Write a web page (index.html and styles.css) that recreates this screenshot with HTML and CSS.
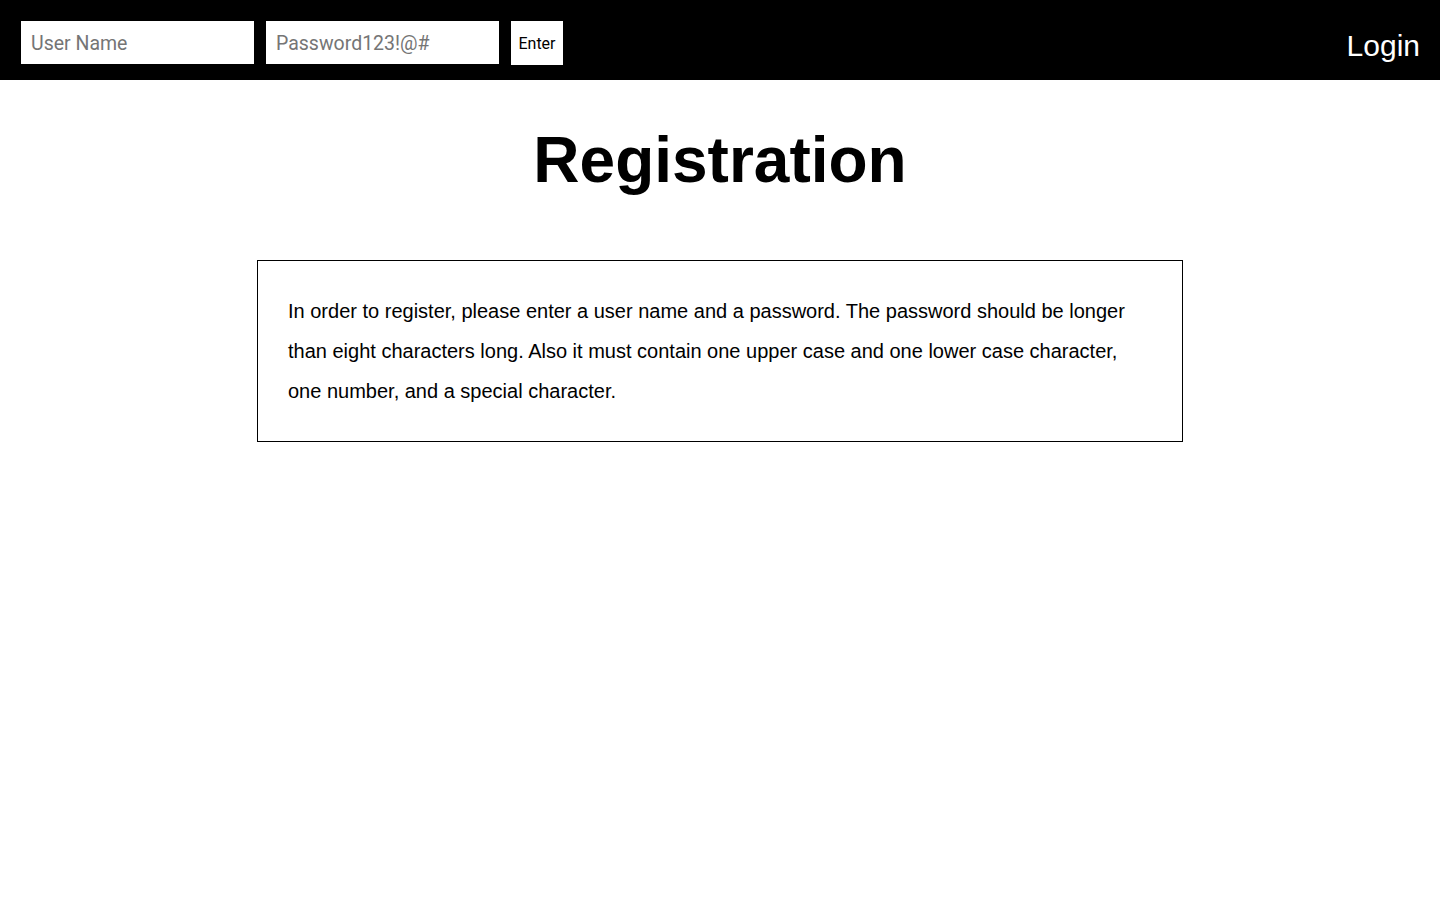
FILE: index.html
```html
<!DOCTYPE html>
<html lang="en">
<head>
<meta charset="utf-8">
<title>Registration</title>
<link rel="stylesheet" href="styles.css">
</head>
<body>
<header class="topbar">
  <form class="login-form">
    <input class="field" type="text" placeholder="User Name">
    <input class="field" type="text" placeholder="Password123!@#">
    <button class="enter" type="button">Enter</button>
  </form>
  <a class="login-link" href="#">Login</a>
</header>
<main class="content">
  <h1 class="title">Registration</h1>
  <div class="info">
    <p>In order to register, please enter a user name and a password. The password should be longer than eight characters long. Also it must contain one upper case and one lower case character, one number, and a special character.</p>
  </div>
</main>
</body>
</html>
```

FILE: styles.css
```css
* { box-sizing: border-box; }
html, body { margin: 0; padding: 0; background: #fff; }
body { font-family: "Liberation Sans", Arial, sans-serif; color: #000; }

.topbar {
  height: 80px;
  background: #000;
  display: flex;
  align-items: center;
  justify-content: space-between;
  padding: 0 21px 0 21px;
}
.login-form {
  display: flex;
  align-items: center;
  gap: 12px;
  margin-top: 5px;
}
.field {
  width: 233px;
  height: 43px;
  border: none;
  outline: none;
  padding: 2px 10px 0;
  font-family: Roboto, "Liberation Sans", sans-serif;
  font-size: 19.5px;
  color: #000;
  background: #fff;
}
.field::placeholder { color: #757575; opacity: 1; }
.enter {
  width: 52px;
  height: 44px;
  border: none;
  background: #fff;
  color: #000;
  padding: 2px 0 0;
  font-family: Roboto, "Liberation Sans", sans-serif;
  font-size: 16px;
  cursor: pointer;
}
.login-link {
  color: #fff;
  text-decoration: none;
  font-family: "Liberation Sans", Arial, sans-serif;
  font-size: 30px;
  margin-top: 12px;
  margin-right: -1px;
}

.content {
  display: flex;
  flex-direction: column;
  align-items: center;
}
.title {
  font-size: 64px;
  font-weight: bold;
  margin: 43px 0 63px;
  line-height: 74px;
}
.info {
  width: 60%;
  border: 1px solid #000;
  padding: 30px;
  box-sizing: content-box;
}
.info p {
  margin: 0;
  font-size: 20px;
  line-height: 40px;
}
```
